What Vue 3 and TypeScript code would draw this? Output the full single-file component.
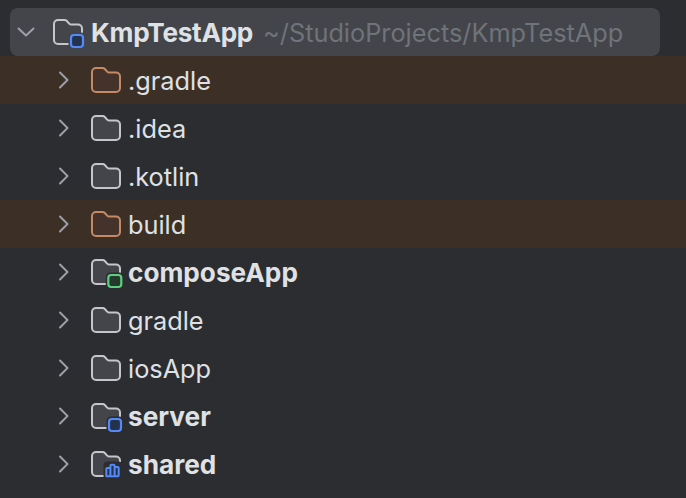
<script setup lang="ts">
type Kind = 'plain' | 'excluded' | 'module' | 'android' | 'shared'

interface Item {
  name: string
  kind: Kind
}

const items: Item[] = [
  { name: '.gradle', kind: 'excluded' },
  { name: '.idea', kind: 'plain' },
  { name: '.kotlin', kind: 'plain' },
  { name: 'build', kind: 'excluded' },
  { name: 'composeApp', kind: 'android' },
  { name: 'gradle', kind: 'plain' },
  { name: 'iosApp', kind: 'plain' },
  { name: 'server', kind: 'module' },
  { name: 'shared', kind: 'shared' },
]

const folderPath = 'M1 5a4 4 0 0 1 4-4h6.6a3 3 0 0 1 2.2 1l2.4 2.6a3 3 0 0 0 2.2 1H25a4 4 0 0 1 4 4V21a4 4 0 0 1-4 4H5a4 4 0 0 1-4-4z'
const isBold = (i: Item) => i.kind === 'module' || i.kind === 'android' || i.kind === 'shared'
</script>

<template>
  <div class="tree">
    <div class="row root">
      <svg class="chev" width="24" height="24" viewBox="0 0 24 24">
        <path d="M4.5 8.5 12 15.5 19.5 8.5" />
      </svg>
      <svg class="folder" width="32" height="26" viewBox="0 0 32 26">
        <path class="f-root" :d="folderPath" />
        <rect class="cut" x="15.5" y="13.5" width="17" height="17" rx="4.5" />
        <rect class="b-blue" x="18" y="16" width="12" height="12" rx="3" />
      </svg>
      <span class="name bold">KmpTestApp</span>
      <span class="path">~/StudioProjects/KmpTestApp</span>
    </div>

    <div v-for="item in items" :key="item.name" class="row child" :class="{ excluded: item.kind === 'excluded' }">
      <svg class="chev" width="24" height="24" viewBox="0 0 24 24">
        <path d="M8 4.5 15.5 12 8 19.5" />
      </svg>
      <svg class="folder" width="32" height="26" viewBox="0 0 32 26">
        <path :class="item.kind === 'excluded' ? 'f-orange' : 'f-plain'" :d="folderPath" />
        <template v-if="item.kind === 'module'">
          <rect class="cut" x="15.5" y="13.5" width="17" height="17" rx="4.5" />
          <rect class="b-blue" x="18" y="16" width="12" height="12" rx="3" />
        </template>
        <template v-else-if="item.kind === 'android'">
          <rect class="cut" x="14.8" y="13.5" width="18" height="17" rx="4.5" />
          <rect class="b-green" x="17.3" y="16" width="13" height="12" rx="3" />
        </template>
        <template v-else-if="item.kind === 'shared'">
          <rect class="cut" x="12.5" y="10.5" width="19" height="18" rx="4" />
          <path class="bars" d="M15.3 25.3v-7.3a1 1 0 0 1 1-1h3.1v8.3zM19.4 25.3V14.7a1 1 0 0 1 1-1h2.2a1 1 0 0 1 1 1v10.6zM23.6 25.3V16h3.1a1 1 0 0 1 1 1v7.3a1 1 0 0 1-1 1z" />
        </template>
      </svg>
      <span class="name" :class="{ bold: isBold(item) }">{{ item.name }}</span>
    </div>
  </div>
</template>

<style>
html, body {
  background: #2b2d30;
}
</style>

<style scoped>
.tree {
  width: 686px;
  height: 498px;
  padding-top: 8px;
  box-sizing: border-box;
  overflow: hidden;
  background: #2b2d30;
  font-family: Inter, "Noto Sans", sans-serif;
  font-size: 25.3px;
  color: #dfe1e5;
}
.row {
  height: 48px;
  display: flex;
  align-items: center;
}
.root {
  margin: 0 26px 0 10px;
  padding-left: 4px;
  background: #43454a;
  border-radius: 8px;
}
.root .folder {
  margin-right: 6px;
}
.child {
  padding-left: 52px;
}
.excluded {
  background: #3c3026;
}
.chev {
  flex: none;
  margin-right: 15px;
}
.chev path {
  fill: none;
  stroke: #9da0a8;
  stroke-width: 2;
  stroke-linecap: round;
  stroke-linejoin: round;
}
.folder {
  flex: none;
  margin-right: 5px;
  overflow: visible;
}
.f-root, .f-plain, .f-orange {
  stroke-width: 2;
}
.f-root {
  fill: #43454a;
  stroke: #c4c6cc;
}
.f-plain {
  fill: #43454a;
  stroke: #c4c6cc;
}
.f-orange {
  fill: #45322b;
  stroke: #c48a66;
}
.cut {
  fill: #2b2d30;
}
.root .cut {
  fill: #43454a;
}
.b-blue {
  fill: #25324d;
  stroke: #548af7;
  stroke-width: 2.2;
}
.b-green {
  fill: #253a2c;
  stroke: #5ccf80;
  stroke-width: 2.2;
}
.bars {
  fill: #25324d;
  stroke: #548af7;
  stroke-width: 2;
  stroke-linejoin: round;
}
.name {
  padding-top: 1px;
  white-space: nowrap;
}
.bold {
  font-weight: 700;
  font-size: 26.2px;
}
.root .bold {
  letter-spacing: -0.3px;
}
.path {
  margin-left: 10px;
  padding-top: 1px;
  color: #6f737a;
  white-space: nowrap;
}
</style>
